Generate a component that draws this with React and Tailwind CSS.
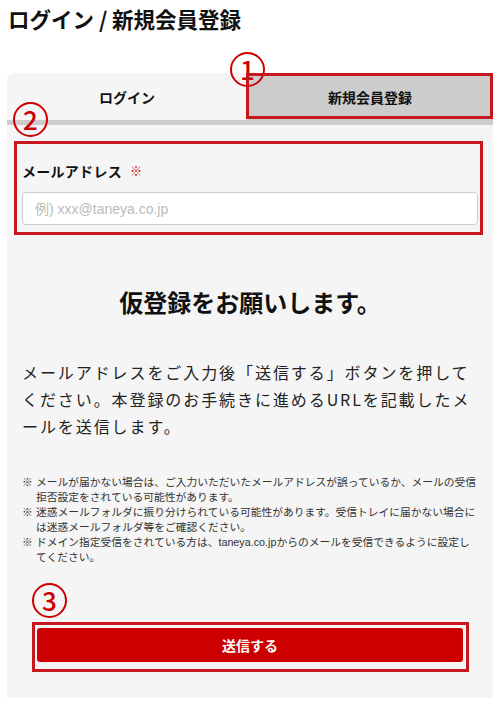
import React from 'react';

const jp = { fontFamily: '"Noto Sans CJK JP", "Noto Sans", sans-serif' };
const mixed = { fontFamily: '"Liberation Sans", "Noto Sans CJK JP", sans-serif' };

const notes = [
  'メールが届かない場合は、ご入力いただいたメールアドレスが誤っているか、メールの受信拒否設定をされている可能性があります。',
  '迷惑メールフォルダに振り分けられている可能性があります。受信トレイに届かない場合には迷惑メールフォルダ等をご確認ください。',
  'ドメイン指定受信をされている方は、taneya.co.jpからのメールを受信できるように設定してください。',
];

function Marker({ n, className }) {
  return (
    <div
      className={`absolute w-[35px] h-[35px] rounded-full border-[2.5px] border-[#cc0000] flex items-center justify-center text-[#cc0000] text-[26px] leading-none font-medium ${className}`}
      style={jp}
    >
      <span className="-mt-[2px]">{n}</span>
    </div>
  );
}

export default function App() {
  return (
    <div className="relative w-full h-[707px] bg-white text-[#111]" style={jp}>
      <h1 className="px-2 pt-[4px] text-[21.5px] leading-[30px] font-bold">ログイン / 新規会員登録</h1>

      <div className="mx-[7px] mt-[39px] rounded-t-lg overflow-hidden bg-[#f5f5f5] pb-[36px]">
        {/* tabs */}
        <div className="flex h-[52px] border-b-[5px] border-[#cccccc]">
          <div className="w-[240px] flex items-center justify-center text-sm font-bold">ログイン</div>
          <div className="flex-1 flex items-center justify-center bg-[#cccccc] text-sm font-bold">新規会員登録</div>
        </div>

        {/* email */}
        <div className="px-[15px] pt-[36px]">
          <div className="flex items-center gap-2 text-sm leading-5 font-bold tracking-[0.02em]">
            メールアドレス
            <span className="text-[#cc0000] text-xs font-normal">※</span>
          </div>
          <input
            type="text"
            placeholder="例) xxx@taneya.co.jp"
            className="mt-[11px] w-full h-[33px] rounded border border-[#cccccc] bg-white px-3 text-sm placeholder:text-[#bbbbbb] outline-none"
            style={mixed}
          />
        </div>

        <h2 className="mt-[61px] text-center text-2xl leading-8 font-bold">仮登録をお願いします。</h2>

        <p className="mt-[41px] px-[15px] text-base leading-[27px] tracking-[0.12em] text-[#222]">
          メールアドレスをご入力後「送信する」ボタンを押してください。本登録のお手続きに進めるURLを記載したメールを送信します。
        </p>

        <ul className="mt-[35px] pl-[15px] pr-[15px] text-[10.75px] leading-[15px] text-[#333]" style={mixed}>
          {notes.map((t) => (
            <li key={t} className="flex">
              <span className="w-[14px] shrink-0">※</span>
              <span>{t}</span>
            </li>
          ))}
        </ul>

        <div className="mt-[63px] px-[30px]">
          <button className="w-full h-[34px] rounded-[3px] bg-[#cc0000] text-white text-sm font-bold">送信する</button>
        </div>
      </div>

      {/* annotations */}
      <Marker n="1" className="left-[230px] top-[52px]" />
      <div className="absolute left-[246px] top-[73px] w-[247px] h-[46px] border-[3px] border-[#c6171e]" />
      <Marker n="2" className="left-[13px] top-[102px]" />
      <div className="absolute left-[14px] top-[141px] w-[469px] h-[94px] border-[3px] border-[#c6171e]" />
      <Marker n="3" className="left-[32px] top-[583px]" />
      <div className="absolute left-[32px] top-[622px] w-[437px] h-[50px] border-[3px] border-[#c6171e]" />
    </div>
  );
}
